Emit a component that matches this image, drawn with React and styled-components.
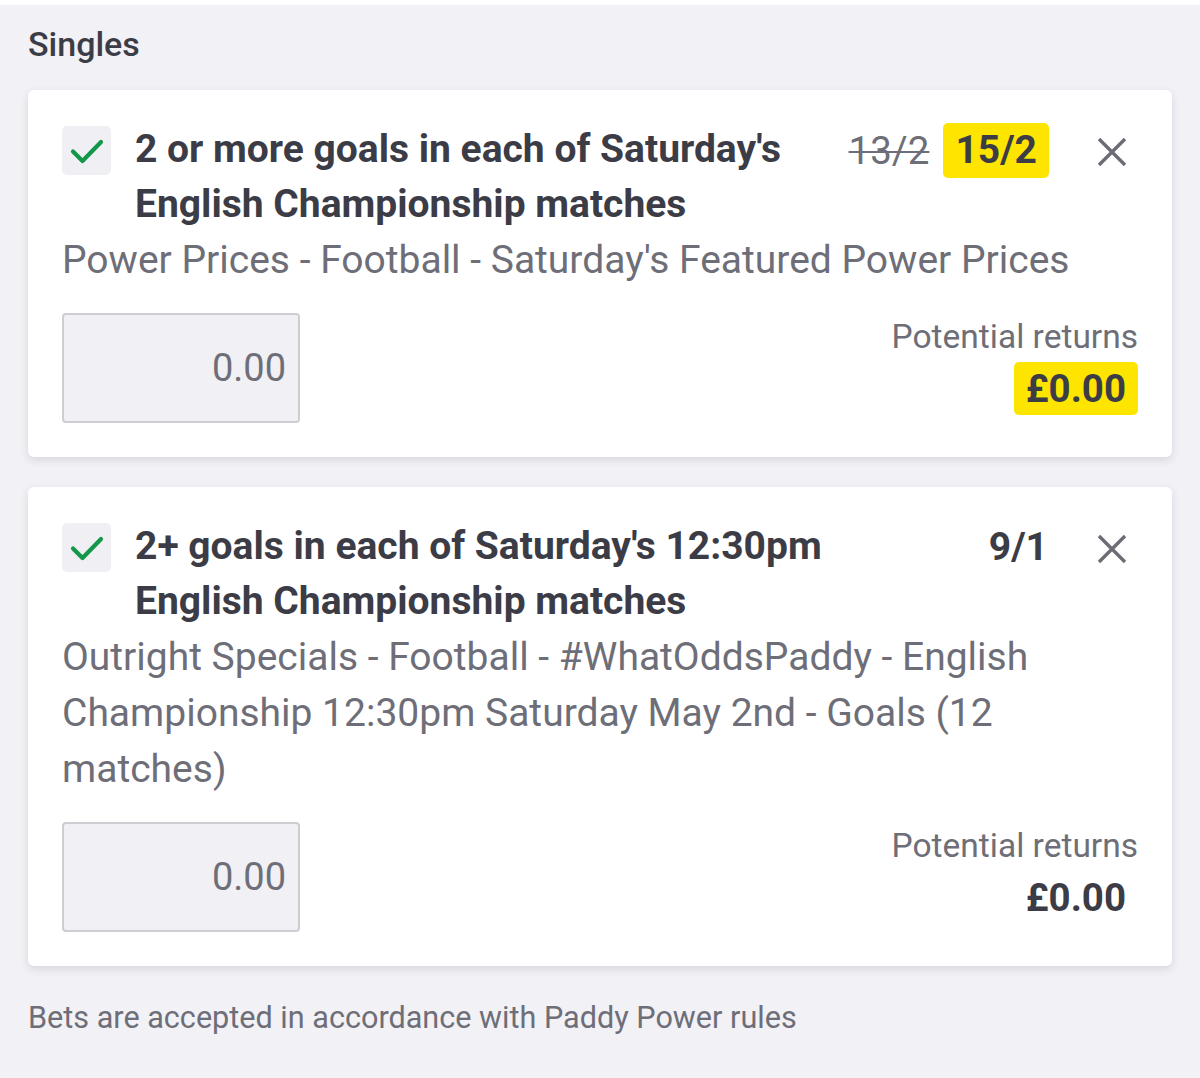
import React from 'react'
import styled, { createGlobalStyle } from 'styled-components'

const GlobalStyle = createGlobalStyle`
  html, body {
    margin: 0;
    padding: 0;
    background: #f1f1f6;
  }
  body {
    font-family: Roboto, "Noto Sans", sans-serif;
  }
`

const Page = styled.div`
  min-height: 1078px;
  box-sizing: border-box;
  border-top: 5px solid #ffffff;
  background: #f1f1f6;
  padding: 0 28px;
`

const SectionTitle = styled.h2`
  margin: 0;
  padding-top: 19px;
  height: 85px;
  box-sizing: border-box;
  font-size: 34px;
  line-height: 40px;
  font-weight: 500;
  color: #3c3c46;
`

const CardList = styled.div`
  display: flex;
  flex-direction: column;
  gap: 30px;
`

const Card = styled.div`
  background: #ffffff;
  border-radius: 6px;
  box-shadow: 0 3px 8px rgba(40, 40, 60, 0.13);
  padding: 32px 34px 34px 34px;
`

const Header = styled.div`
  display: flex;
  align-items: flex-start;
`

const CheckBox = styled.div`
  width: 49px;
  height: 49px;
  flex: none;
  margin-top: 4px;
  margin-right: 24px;
  border-radius: 5px;
  background: #f0f0f4;
  display: flex;
  align-items: center;
  justify-content: center;
`

const Title = styled.div`
  width: 700px;
  font-size: 39px;
  line-height: 55px;
  font-weight: 700;
  color: #3c3c46;
`

const OddsBox = styled.div`
  margin-left: auto;
  display: flex;
  align-items: center;
  gap: 14px;
  height: 55px;
  margin-top: 1px;
`

const OldOdds = styled.span`
  font-size: 38.5px;
  color: #6e6e78;
  text-decoration: line-through;
  text-decoration-thickness: 2px;
`

const Odds = styled.span`
  font-size: 39px;
  font-weight: 700;
  color: #3c3c46;
  padding: 0 ${({ boosted }) => (boosted ? '12px' : '1px')};
  line-height: 55px;
  border-radius: 5px;
  background: ${({ boosted }) => (boosted ? '#fde500' : 'transparent')};
`

const CloseButton = styled.button`
  border: none;
  background: none;
  padding: 0;
  margin-left: 47px;
  margin-right: 10px;
  margin-top: 14px;
  width: 32px;
  height: 32px;
  display: flex;
  cursor: pointer;
`

const Subtitle = styled.div`
  font-size: 39px;
  line-height: 56px;
  color: #6e6e78;
`

const Footer = styled.div`
  display: flex;
  justify-content: space-between;
  align-items: flex-start;
  margin-top: 25px;
`

const StakeInput = styled.div`
  width: 238px;
  height: 110px;
  box-sizing: border-box;
  border: 2px solid #cdcdd2;
  border-radius: 4px;
  background: #f0f0f5;
  display: flex;
  align-items: center;
  justify-content: flex-end;
  padding-right: 12px;
  font-size: 38px;
  color: #6e6e78;
`

const Returns = styled.div`
  display: flex;
  flex-direction: column;
  align-items: flex-end;
  padding-top: 4px;
`

const ReturnsLabel = styled.div`
  font-size: 33.5px;
  line-height: 40px;
  color: #6e6e78;
`

const ReturnsValue = styled.div`
  margin-top: 5px;
  font-size: 38.5px;
  line-height: 53px;
  font-weight: 700;
  color: #3c3c46;
  padding: 0 12px;
  border-radius: 5px;
  background: ${({ boosted }) => (boosted ? '#fde500' : 'transparent')};
`

const Disclaimer = styled.p`
  margin: 0;
  padding-top: 32px;
  font-size: 30.6px;
  line-height: 40px;
  color: #6e6e78;
`

const Check = () => (
  <svg width="34" height="26" viewBox="0 0 34 26" fill="none">
    <path d="M3 13.5l9.5 9.5L31 4" stroke="#13974a" strokeWidth="4.2" strokeLinecap="round" strokeLinejoin="round" />
  </svg>
)

const Cross = () => (
  <svg width="32" height="32" viewBox="0 0 32 32" fill="none">
    <path d="M3 3l26 26M29 3L3 29" stroke="#6c6c74" strokeWidth="3.4" />
  </svg>
)

const bets = [
  {
    id: 1,
    title: "2 or more goals in each of Saturday's English Championship matches",
    market: "Power Prices - Football - Saturday's Featured Power Prices",
    oldOdds: '13/2',
    odds: '15/2',
    boosted: true,
  },
  {
    id: 2,
    title: "2+ goals in each of Saturday's 12:30pm English Championship matches",
    market: 'Outright Specials - Football - #WhatOddsPaddy - English Championship 12:30pm Saturday May 2nd - Goals (12 matches)',
    odds: '9/1',
    boosted: false,
  },
]

function BetCard({ bet }) {
  return (
    <Card>
      <Header>
        <CheckBox><Check /></CheckBox>
        <Title>{bet.title}</Title>
        <OddsBox>
          {bet.oldOdds ? <OldOdds>{bet.oldOdds}</OldOdds> : null}
          <Odds boosted={bet.boosted}>{bet.odds}</Odds>
        </OddsBox>
        <CloseButton aria-label="Remove"><Cross /></CloseButton>
      </Header>
      <Subtitle>{bet.market}</Subtitle>
      <Footer>
        <StakeInput>0.00</StakeInput>
        <Returns>
          <ReturnsLabel>Potential returns</ReturnsLabel>
          <ReturnsValue boosted={bet.boosted}>£0.00</ReturnsValue>
        </Returns>
      </Footer>
    </Card>
  )
}

export default function App() {
  return (
    <>
      <GlobalStyle />
      <Page>
        <SectionTitle>Singles</SectionTitle>
        <CardList>
          {bets.map((bet) => <BetCard key={bet.id} bet={bet} />)}
        </CardList>
        <Disclaimer>Bets are accepted in accordance with Paddy Power rules</Disclaimer>
      </Page>
    </>
  )
}
